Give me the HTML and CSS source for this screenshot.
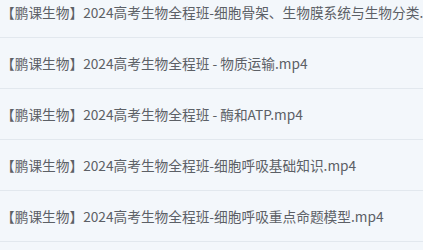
FILE: index.html
```html
<!DOCTYPE html>
<html lang="zh">
<head>
<meta charset="utf-8">
<link rel="stylesheet" href="styles.css">
</head>
<body>
<ul class="list">
  <li class="item">【鹏课生物】2024高考生物全程班-细胞骨架、生物膜系统与生物分类.mp4</li>
  <li class="item">【鹏课生物】2024高考生物全程班 - 物质运输.mp4</li>
  <li class="item">【鹏课生物】2024高考生物全程班 - 酶和ATP.mp4</li>
  <li class="item">【鹏课生物】2024高考生物全程班-细胞呼吸基础知识.mp4</li>
  <li class="item">【鹏课生物】2024高考生物全程班-细胞呼吸重点命题模型.mp4</li>
</ul>
</body>
</html>
```
FILE: styles.css
```css
html, body {
  margin: 0;
  padding: 0;
  background: #f3f7fb;
  overflow: hidden;
}
.list {
  list-style: none;
  margin: -13px 0 0 0;
  padding: 0;
}
.item {
  height: 50px;
  display: flex;
  align-items: center;
  padding-left: 1px;
  border-bottom: 1px solid #e2e8ee;
  font-family: "Noto Sans CJK SC", "Noto Sans", sans-serif;
  font-size: 13.7px;
  color: #5c6066;
  white-space: nowrap;
  overflow: hidden;
}
```
